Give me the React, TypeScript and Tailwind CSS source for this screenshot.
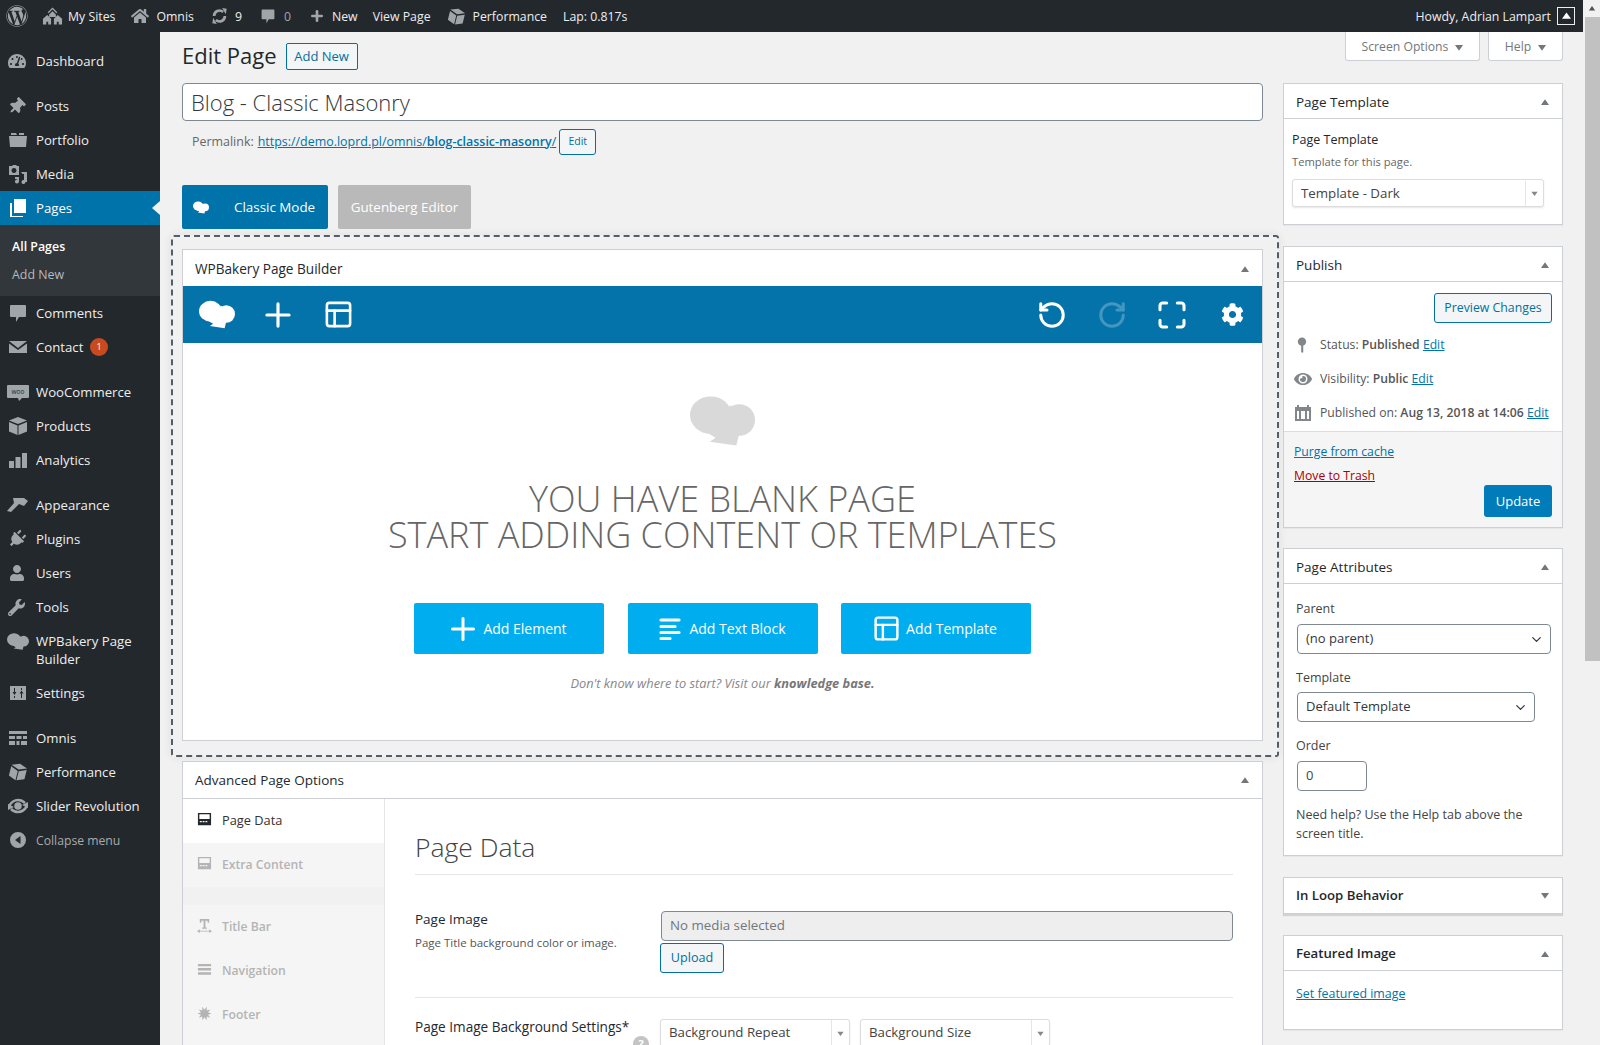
import type { ReactNode } from "react"
import { ChevronDown, Maximize, PanelsTopLeft, Plus, RotateCcw, RotateCw } from "lucide-react"
import { FaCog, FaHome, FaPlug, FaThumbtack, FaUser, FaWordpress, FaWrench, FaTachometerAlt, FaEye } from "react-icons/fa"

type IconProps = { className?: string }

function Chef({ className }: IconProps) {
  return (
    <svg viewBox="0 0 66 50" className={className} fill="currentColor">
      <ellipse cx="21" cy="19" rx="21" ry="19" />
      <circle cx="50" cy="24" r="16" />
      <path d="M22 4 Q36 14 42 9 L50 38 L47 50 L20 46 L26 42 L14 35 Z" />
    </svg>
  )
}

function Tri({ down = false, className }: IconProps & { down?: boolean }) {
  return (
    <svg viewBox="0 0 10 8" className={className} fill="currentColor">
      <path d={down ? "M0 1h10L5 8z" : "M5 0l5 7H0z"} />
    </svg>
  )
}

const box = "h-5 w-5"

function Portfolio() {
  return (
    <svg viewBox="0 0 20 20" className={box} fill="currentColor">
      <path d="M1 6h18l-1 11H2zM3 3h5l1 2H3zM11 3h5v2h-5z" />
    </svg>
  )
}

function Media() {
  return (
    <svg viewBox="0 0 20 20" className={box} fill="currentColor">
      <path d="M1 2h3l1-1h3l1 1h2v9H1zM6 4a2.500 2.500 0 1 0 .01 0z" fillRule="evenodd" />
      <path d="M13 8h6v10h-1.500a2 2 0 1 1-1.500-2V10h-1.500zM7 13h4v4.500a2 2 0 1 1-1.500-2V15H7z" />
    </svg>
  )
}

function Pages() {
  return (
    <svg viewBox="0 0 20 20" className={box} fill="currentColor">
      <path d="M6 1h12v14H6z" />
      <path d="M2 5h2v13h11v1H2z" />
    </svg>
  )
}

function Bubble({ className = box }: IconProps) {
  return (
    <svg viewBox="0 0 20 20" className={className} fill="currentColor">
      <path d="M3 2h14a1 1 0 0 1 1 1v10a1 1 0 0 1-1 1h-6l-3 5v-5H3a1 1 0 0 1-1-1V3a1 1 0 0 1 1-1z" />
    </svg>
  )
}

function Mail() {
  return (
    <svg viewBox="0 0 20 20" className={box} fill="currentColor">
      <path d="M1 4h18L10 11zM1 6.500l9 6.500 9-6.500V16H1z" />
    </svg>
  )
}

function Woo() {
  return (
    <svg viewBox="0 0 22 20" className="-ml-[1px] h-5 w-[22px]">
      <path d="M1 3h20a1 1 0 0 1 1 1v11a1 1 0 0 1-1 1h-6l-3 3-1-3H1a1 1 0 0 1-1-1V4a1 1 0 0 1 1-1z" fill="currentColor" />
      <text x="11" y="12" fontSize="6.500" textAnchor="middle" fill="#23282d">woo</text>
    </svg>
  )
}

function Cube() {
  return (
    <svg viewBox="0 0 20 20" className={box} fill="currentColor">
      <path d="M10 1l9 3.500-9 3.500-9-3.500zM1 6l8.500 3.500V19L1 15.500zM19 6v9.500L10.500 19V9.500z" />
    </svg>
  )
}

function Bars() {
  return (
    <svg viewBox="0 0 20 20" className={box} fill="currentColor">
      <path d="M1 11h5v7H1zM7.500 7h5v11h-5zM14 3h5v15h-5z" />
    </svg>
  )
}

function Hammer() {
  return (
    <svg viewBox="0 0 22 20" className="-ml-[1px] h-5 w-[22px]" fill="currentColor">
      <path d="M6 3h11l4 3-4 5-5-2-8 8-4-1 7-8z" />
    </svg>
  )
}

function Sliders() {
  return (
    <svg viewBox="0 0 20 20" className={box} fill="currentColor" fillRule="evenodd">
      <path d="M2 3h16v14H2zM6 5v4H4.500L6.500 12 8.500 9H7V5zM6 13v2h1v-2zM13 5v2h1V5zM13.500 7.500L11.500 10.500H13V15h1v-4.500h1.500z" />
    </svg>
  )
}

function OmnisIcon() {
  return (
    <svg viewBox="0 0 20 20" className={box} fill="currentColor">
      <path d="M1 3h18v3H1zM1 8h6v3H1zM8.500 8h5v3h-5zM15 8h4v3h-4zM1 13h6v4H1zM8.500 13h3v4h-3zM13 13h6v4h-6z" />
    </svg>
  )
}

function Perf({ className = box }: IconProps) {
  return (
    <svg viewBox="0 0 20 20" className={className} fill="currentColor">
      <g transform="rotate(14 10 10)">
        <path d="M10 1.500l8 3-8 3-8-3z" />
        <path d="M2 6l7.500 3v9.500L2 15.500zM18 6v9.500l-7.500 3V9z" />
      </g>
    </svg>
  )
}

function Slider() {
  return (
    <svg viewBox="0 0 22 20" className="-ml-[1px] h-5 w-[22px]" fill="none" stroke="currentColor" strokeWidth="2.500">
      <path d="M2 10c3-5 6-6 9-6 3 0 5 1 7 3M20 10c-3 5-6 6-9 6-3 0-5-1-7-3" />
      <circle cx="11" cy="10" r="2.500" fill="currentColor" />
      <path d="M15 9l6-3v6zM7 11l-6 3V8z" fill="currentColor" stroke="none" />
    </svg>
  )
}

function Collapse() {
  return (
    <svg viewBox="0 0 20 20" className={box} fill="currentColor" fillRule="evenodd">
      <path d="M10 2a8 8 0 1 1 0 16 8 8 0 0 1 0-16zM12.500 6L7 10l5.500 4z" />
    </svg>
  )
}

function Sync({ className }: IconProps) {
  return (
    <svg viewBox="0 0 20 20" className={className} fill="none" stroke="currentColor" strokeWidth="3">
      <path d="M4 10a6 6 0 0 1 10-4.500M16 10a6 6 0 0 1-10 4.500" />
      <path d="M13 1l5 1-1 6zM7 19l-5-1 1-6z" fill="currentColor" stroke="none" />
    </svg>
  )
}

function Sites() {
  return (
    <svg viewBox="0 0 22 20" className="h-5 w-[21px]" fill="currentColor">
      <path d="M11 1l5 5-1 1-4-4-4 4-1-1zM11 5l3.500 3.500V11h-7V8.500z" />
      <path d="M5.500 9l4 4v6h-3v-3h-2v3H1v-6zM16.500 9l4.500 4v6h-3.500v-3h-2v3h-3v-6z" />
    </svg>
  )
}

function TextLines({ className }: IconProps) {
  return (
    <svg viewBox="0 0 22 24" className={className} fill="none" stroke="currentColor" strokeWidth="3.200" strokeLinecap="round">
      <path d="M2 3h18M2 9.500h14M2 15.500h18M2 21.500h9" />
    </svg>
  )
}

function MenuItem({ icon, label, active, dim, badge }: { icon: ReactNode; label: ReactNode; active?: boolean; dim?: boolean; badge?: string }) {
  return (
    <div className={`relative flex items-start py-[8px] pl-[8px] leading-[18px] ${active ? "bg-[#0073aa] text-white" : dim ? "text-[#aaaaaa]" : "text-[#eeeeee]"}`}>
      <span className={`flex h-[18px] w-[28px] shrink-0 items-center ${active ? "text-white" : "text-[#a0a5aa]"}`}>{icon}</span>
      <span className="flex-1">{label}</span>
      {badge && (
        <span className="absolute left-[90px] top-[8px] flex h-[18px] w-[18px] items-center justify-center rounded-full bg-[#ca4a1f] text-[9px] text-white">
          {badge}
        </span>
      )}
      {active && (
        <span className="absolute right-0 top-[10px] h-0 w-0 border-y-[7px] border-r-[8px] border-y-transparent border-r-[#f1f1f1]" />
      )}
    </div>
  )
}

function Sidebar() {
  return (
    <aside className="h-full w-[160px] shrink-0 bg-[#23282d] pt-[12px] text-[13.2px]">
      <MenuItem icon={<FaTachometerAlt className="h-[18px] w-[18px]" />} label="Dashboard" />
      <div className="h-[11px]" />
      <MenuItem icon={<FaThumbtack className="h-[17px] w-[17px] rotate-45" />} label="Posts" />
      <MenuItem icon={<Portfolio />} label="Portfolio" />
      <MenuItem icon={<Media />} label="Media" />
      <MenuItem active icon={<Pages />} label="Pages" />
      <div className="h-[71px] bg-[#32373c] pl-[12px] pt-[8px] text-[12.4px] leading-[28px] text-[#b4b9be]">
        <div className="font-semibold text-white">All Pages</div>
        <div>Add New</div>
      </div>
      <MenuItem icon={<Bubble />} label="Comments" />
      <MenuItem icon={<Mail />} label="Contact" badge="1" />
      <div className="h-[11px]" />
      <MenuItem icon={<Woo />} label="WooCommerce" />
      <MenuItem icon={<Cube />} label="Products" />
      <MenuItem icon={<Bars />} label="Analytics" />
      <div className="h-[11px]" />
      <MenuItem icon={<Hammer />} label="Appearance" />
      <MenuItem icon={<FaPlug className="h-[18px] w-[18px] rotate-45" />} label="Plugins" />
      <MenuItem icon={<FaUser className="h-[16px] w-[18px]" />} label="Users" />
      <MenuItem icon={<FaWrench className="h-[17px] w-[17px]" />} label="Tools" />
      <MenuItem icon={<Chef className="-ml-[1px] h-[17px] w-[22px]" />} label="WPBakery Page Builder" />
      <MenuItem icon={<Sliders />} label="Settings" />
      <div className="h-[11px]" />
      <MenuItem icon={<OmnisIcon />} label="Omnis" />
      <MenuItem icon={<Perf />} label="Performance" />
      <MenuItem icon={<Slider />} label="Slider Revolution" />
      <MenuItem dim icon={<Collapse />} label={<span className="text-[12.2px]">Collapse menu</span>} />
    </aside>
  )
}

function AdminBar() {
  return (
    <header className="flex h-[32px] shrink-0 items-center bg-[#23282d] pt-[2px] text-[12.3px] text-[#eeeeee]">
      <div className="-mt-[2px] flex items-center pl-[6px] text-[#a0a5aa]">
        <FaWordpress className="h-[22px] w-[22px]" />
        <span className="ml-[14px]"><Sites /></span>
      </div>
      <span className="ml-[5px]">My Sites</span>
      <FaHome className="-mt-[2px] ml-[16px] h-[18px] w-[18px] text-[#a0a5aa]" />
      <span className="ml-[7px]">Omnis</span>
      <Sync className="-mt-[2px] ml-[16px] h-[18px] w-[19px] text-[#a0a5aa]" />
      <span className="ml-[6px]">9</span>
      <span className="-mt-[2px] ml-[18px] text-[#a0a5aa]"><Bubble className="h-[18px] w-[16px]" /></span>
      <span className="ml-[8px] text-[#a0a5aa]">0</span>
      <Plus className="-mt-[2px] ml-[18px] h-[16px] w-[16px] text-[#a0a5aa]" strokeWidth={4} />
      <span className="ml-[7px]">New</span>
      <span className="ml-[15px]">View Page</span>
      <span className="-mt-[2px] ml-[16px] text-[#a0a5aa]"><Perf className="h-[19px] w-[19px]" /></span>
      <span className="ml-[7px]">Performance</span>
      <span className="ml-[16px]">Lap: 0.817s</span>
      <span className="ml-auto">Howdy, Adrian Lampart</span>
      <span className="-mt-[2px] ml-[6px] mr-[8px] flex h-[18px] w-[18px] items-center justify-center border border-[#eeeeee]">
        <Tri className="h-[8px] w-[9px] text-white" />
      </span>
    </header>
  )
}

function Metabox({ title, closed, bold, headClass = "h-[35px] pt-[2px]", className = "", children }: { title: string; closed?: boolean; bold?: boolean; headClass?: string; className?: string; children?: ReactNode }) {
  return (
    <section className={`border border-[#ccd0d4] bg-white shadow-[0_1px_1px_rgba(0,0,0,0.04)] ${className}`}>
      <div className={`flex items-center justify-between pl-[12px] pr-[13px] text-[#23282d] ${closed ? "h-[35px]" : `border-b border-[#ccd0d4] ${headClass}`} ${bold ? "text-[13.2px] font-semibold" : "text-[13.5px] font-medium"}`}>
        <span>{title}</span>
        <Tri down={closed} className="h-[7px] w-[8px] text-[#72777c]" />
      </div>
      {children}
    </section>
  )
}

function TabIcon({ d }: { d: string }) {
  return (
    <svg viewBox="0 0 16 16" className="-mt-[3px] h-[15px] w-[15px]" fill="currentColor" fillRule="evenodd">
      <path d={d} />
    </svg>
  )
}

const windowIcon = "M1 1h14v13H1zM2.500 2.500v5h11v-5zM3 9.500v1.500h2V9.500zM6 9.500v1.500h2V9.500zM9 9.500v1.500h2V9.500z"

function Tab({ icon, label, active }: { icon: ReactNode; label: string; active?: boolean }) {
  return (
    <div className={`flex h-[44px] items-center pl-[14px] ${active ? "bg-white text-[12.8px] text-[#333333]" : "bg-[#f5f5f5] text-[12.2px] font-semibold text-[#b4b4b4]"}`}>
      <span className="w-[25px]">{icon}</span>
      {label}
    </div>
  )
}

function PickSelect({ label, className = "" }: { label: string; className?: string }) {
  return (
    <div className={`flex h-[28px] items-center rounded-[3px] border border-[#dddddd] bg-white pl-[8px] text-[13.3px] text-[#444444] shadow-[0_1px_2px_rgba(0,0,0,0.1)] ${className}`}>
      <span className="flex-1">{label}</span>
      <span className="flex h-full w-[18px] items-center justify-center border-l border-[#e5e5e5] text-[#888888]">
        <Tri down className="h-[5px] w-[7px]" />
      </span>
    </div>
  )
}

function CyanButton({ icon, label }: { icon: ReactNode; label: string }) {
  return (
    <div className="flex h-[51px] w-[190px] items-center justify-center gap-[8px] rounded-[2px] bg-[#00aeef] text-[14px] text-white">
      {icon}
      {label}
    </div>
  )
}

function Builder() {
  return (
    <section className="border border-[#ccd0d4] bg-white">
      <div className="flex h-[36px] items-center justify-between pl-[12px] pr-[13px] pt-[2px] text-[13.6px] font-medium text-[#23282d]">
        <span>WPBakery Page Builder</span>
        <Tri className="h-[7px] w-[8px] text-[#72777c]" />
      </div>
      <div className="flex h-[57px] items-center justify-between bg-[#0473aa] pl-[4px] text-white">
        <div className="flex items-center">
          <span className="flex w-[60px] justify-center"><Chef className="h-[29px] w-[36px]" /></span>
          <span className="flex w-[62px] justify-center"><Plus className="h-[38px] w-[38px]" strokeWidth={2} /></span>
          <span className="flex w-[58px] justify-center"><PanelsTopLeft className="h-[31px] w-[31px]" strokeWidth={2} /></span>
        </div>
        <div className="flex items-center">
          <span className="flex w-[60px] justify-center"><RotateCcw className="h-[30px] w-[30px]" strokeWidth={2.4} /></span>
          <span className="flex w-[60px] justify-center opacity-25"><RotateCw className="h-[30px] w-[30px]" strokeWidth={2.4} /></span>
          <span className="flex w-[60px] justify-center"><Maximize className="h-[32px] w-[32px]" strokeWidth={2.3} /></span>
          <span className="flex w-[60px] justify-center"><FaCog className="h-[23px] w-[23px]" /></span>
        </div>
      </div>
      <div className="flex h-[397px] flex-col items-center pt-[53px]">
        <Chef className="h-[50px] w-[65px] text-[#d9d9d9]" />
        <h2 className="mt-[35px] text-center text-[36px] font-light leading-[36px] text-[#666666]">
          YOU HAVE BLANK PAGE
          <br />
          START ADDING CONTENT OR TEMPLATES
        </h2>
        <div className="mt-[50px] flex gap-[23.5px]">
          <CyanButton icon={<Plus className="-mx-[6px] h-[36px] w-[36px]" strokeWidth={2} />} label="Add Element" />
          <CyanButton icon={<TextLines className="h-[24px] w-[22px]" />} label="Add Text Block" />
          <CyanButton icon={<PanelsTopLeft className="-mx-[3px] h-[29px] w-[29px]" strokeWidth={2} />} label="Add Template" />
        </div>
        <p className="mt-[20px] text-[12.8px] italic text-[#888888]">
          Don't know where to start? Visit our <b className="font-bold text-[#777777]">knowledge base.</b>
        </p>
      </div>
    </section>
  )
}

function AdvancedOptions() {
  const burst = Array.from({ length: 20 }, (_, i) => {
    const r = i % 2 ? 4 : 7.5
    const a = (i * Math.PI) / 10
    return `${(8 + r * Math.cos(a)).toFixed(1)},${(8 + r * Math.sin(a)).toFixed(1)}`
  }).join(" ")

  return (
    <Metabox title="Advanced Page Options" headClass="h-[37px]" className="mt-[4px] h-[400px]">
      <div className="flex">
        <div className="w-[202px] shrink-0 border-r border-[#e5e5e5] bg-[#f1f1f1]">
          <Tab active icon={<span className="text-[#23282d]"><TabIcon d={windowIcon} /></span>} label="Page Data" />
          <Tab icon={<TabIcon d={windowIcon} />} label="Extra Content" />
          <div className="h-[18px]" />
          <Tab icon={<TabIcon d="M3 1h10v4h-1.500L11 3H9v7h1.500v1.500h-5V10H7V3H5L4.500 5H3zM0 14l3-2v1.500h10V12l3 2-3 2v-1.500H3V16z" />} label="Title Bar" />
          <Tab icon={<TabIcon d="M1 2h14v2.500H1zM1 6.500h14V9H1zM1 11h14v2.500H1z" />} label="Navigation" />
          <Tab icon={<svg viewBox="0 0 16 16" className="-mt-[3px] h-[15px] w-[15px]" fill="currentColor"><polygon points={burst} /></svg>} label="Footer" />
          <div className="h-[40px] bg-[#f5f5f5]" />
        </div>
        <div className="flex-1 pl-[30px] pr-[29px] text-[#444444]">
          <h3 className="mt-[30px] h-[46px] border-b border-[#e5e5e5] text-[26.5px] font-light leading-[36px] text-[#444444]">Page Data</h3>
          <div className="flex border-b border-[#e5e5e5] pb-[24px] pt-[36px]">
            <div className="-mt-[1px] w-[246px] shrink-0">
              <div className="text-[13.5px] font-medium leading-[18px] text-[#23282d]">Page Image</div>
              <div className="mt-[7px] text-[11.5px] leading-[16px] text-[#555555]">Page Title background color or image.</div>
            </div>
            <div className="flex-1">
              <div className="flex h-[30px] items-center rounded-[4px] border border-[#7e8993] bg-[#eeeeee] pl-[8px] text-[13.3px] text-[#72777c]">No media selected</div>
              <div className="-ml-px mt-[2px] flex h-[30px] w-[64px] items-center justify-center rounded-[3px] border border-[#0071a1] bg-[#f3f5f6] text-[12.6px] text-[#0071a1]">Upload</div>
            </div>
          </div>
          <div className="flex pt-[20px]">
            <div className="relative w-[245px] shrink-0 whitespace-nowrap text-[13.6px] font-medium leading-[18px] text-[#23282d]">
              Page Image Background Settings*
              <span className="absolute left-[218px] top-[18px] flex h-[16px] w-[16px] items-center justify-center rounded-full bg-[#c4c4c4] text-[11px] font-bold text-white">?</span>
            </div>
            <div className="mt-[1px] flex gap-[10px]">
              <PickSelect label="Background Repeat" className="w-[190px]" />
              <PickSelect label="Background Size" className="w-[190px]" />
            </div>
          </div>
        </div>
      </div>
    </Metabox>
  )
}

function NativeSelect({ label, className = "" }: { label: string; className?: string }) {
  return (
    <div className={`flex h-[30px] items-center justify-between rounded-[4px] border border-[#7e8993] bg-white pl-[8px] pr-[6px] text-[13px] text-[#32373c] ${className}`}>
      {label}
      <ChevronDown className="h-[15px] w-[15px]" strokeWidth={2} />
    </div>
  )
}

function Row({ icon, children }: { icon: ReactNode; children: ReactNode }) {
  return (
    <div className="flex h-[34px] items-center pl-[9px] text-[12.2px] text-[#555555]">
      <span className="flex w-[27px] justify-start text-[#82878c]">{icon}</span>
      <span>{children}</span>
    </div>
  )
}

function Edit() {
  return <a className="text-[#0073aa] underline">Edit</a>
}

function PublishBox() {
  return (
    <Metabox title="Publish" className="mt-[21px]">
      <div className="flex justify-end pr-[10px] pt-[11px]">
        <div className="flex h-[30px] w-[118px] items-center justify-center rounded-[3px] border border-[#0071a1] bg-[#f3f5f6] text-[12.3px] text-[#0071a1]">Preview Changes</div>
      </div>
      <div className="mt-[5px] pb-[1px]">
        <Row icon={<svg viewBox="0 0 12 20" className="ml-[4px] h-[18px] w-[10px]" fill="currentColor"><circle cx="6" cy="6" r="5" /><rect x="5" y="8" width="2.500" height="11" /></svg>}>
          Status: <b className="font-semibold">Published</b> <Edit />
        </Row>
        <Row icon={<FaEye className="h-[16px] w-[20px]" />}>
          Visibility: <b className="font-semibold">Public</b> <Edit />
        </Row>
        <Row icon={<svg viewBox="0 0 18 18" className="ml-[1px] h-[18px] w-[18px]" fill="currentColor" fillRule="evenodd"><path d="M1 3h2V1h2v2h8V1h2v2h2v14H1zM3 7v8h2V7zM7 7v8h4V7zM13 7v8h2V7z" /></svg>}>
          Published on: <b className="font-semibold">Aug 13, 2018 at 14:06</b> <Edit />
        </Row>
      </div>
      <div className="h-[96px] border-t border-[#dddddd] bg-[#f5f5f5] pl-[10px] pr-[10px] pt-[9px] text-[12.2px]">
        <div className="leading-[21px] text-[#0073aa] underline">Purge from cache</div>
        <div className="mt-[3px] leading-[21px] text-[#a00] underline">Move to Trash</div>
        <div className="-mt-[1px] flex justify-end">
          <div className="flex h-[32px] w-[68px] items-center justify-center rounded-[3px] bg-[#007cba] pt-[1px] text-[13px] text-white">Update</div>
        </div>
      </div>
    </Metabox>
  )
}

function RightColumn() {
  return (
    <div className="w-[280px] shrink-0">
      <div className="flex justify-end gap-[8px] text-[12.2px] text-[#72777c]">
        <div className="flex h-[29px] w-[135px] items-center justify-center gap-[7px] rounded-b-[3px] border border-t-0 border-[#ccd0d4] bg-white pt-[2px]">
          Screen Options <Tri down className="h-[7px] w-[8px]" />
        </div>
        <div className="flex h-[29px] w-[75px] items-center justify-center gap-[7px] rounded-b-[3px] border border-t-0 border-[#ccd0d4] bg-white pt-[2px]">
          Help <Tri down className="h-[7px] w-[8px]" />
        </div>
      </div>

      <Metabox title="Page Template" className="mt-[22px] h-[142px]">
        <div className="pl-[8px] pt-[12px]">
          <div className="text-[12.5px] font-medium leading-[18px] text-[#23282d]">Page Template</div>
          <div className="mt-[5px] text-[11.2px] leading-[16px] text-[#666666]">Template for this page.</div>
          <PickSelect label="Template - Dark" className="mt-[9px] w-[252px] pt-[1px]" />
        </div>
      </Metabox>

      <PublishBox />

      <Metabox title="Page Attributes" className="mt-[20px] h-[308px]">
        <div className="px-[12px] pt-[16px] text-[12.5px] text-[#444444]">
          <div className="leading-[18px]">Parent</div>
          <NativeSelect label="(no parent)" className="ml-px mt-[6px] w-[254px]" />
          <div className="mt-[15px] leading-[18px]">Template</div>
          <NativeSelect label="Default Template" className="ml-px mt-[5px] w-[238px]" />
          <div className="mt-[15px] leading-[18px]">Order</div>
          <div className="ml-px mt-[6px] flex h-[30px] w-[70px] items-center rounded-[4px] border border-[#7e8993] pl-[8px] text-[13px]">0</div>
          <p className="mt-[14px] leading-[19px]">Need help? Use the Help tab above the screen title.</p>
        </div>
      </Metabox>

      <Metabox closed bold title="In Loop Behavior" className="mt-[21px] shadow-[0_2px_1px_rgba(0,0,0,0.12)]" />

      <Metabox title="Featured Image" bold className="mt-[21px] h-[95px]">
        <div className="pl-[12px] pt-[14px] text-[12.4px] leading-[18px] text-[#0073aa] underline">Set featured image</div>
      </Metabox>
    </div>
  )
}

function LeftColumn() {
  return (
    <div className="w-[1081px] shrink-0">
      <div className="mt-[11px] flex h-[27px] items-center gap-[9px]">
        <h1 className="pb-[3px] text-[22px] leading-[27px] text-[#23282d]">Edit Page</h1>
        <div className="flex h-[27px] w-[72px] items-center justify-center rounded-[2px] border border-[#0071a1] bg-[#f3f5f6] text-[13px] text-[#0071a1]">Add New</div>
      </div>
      <div className="mt-[13px] flex h-[38px] items-center rounded-[4px] border border-[#7e8993] bg-white pl-[8px] pt-[1px] text-[22px] font-light text-[#32373c]">Blog - Classic Masonry</div>
      <div className="mt-[8px] flex h-[26px] items-center pl-[10px] text-[12.45px] text-[#666666]">
        <span className="font-medium">Permalink:</span>
        <a className="ml-[4px] text-[#0073aa] underline">
          https://demo.loprd.pl/omnis/<b className="font-semibold">blog-classic-masonry</b>/
        </a>
        <span className="ml-[3px] flex h-[26px] w-[37px] items-center justify-center rounded-[3px] border border-[#0071a1] bg-[#f3f5f6] text-[10.5px] text-[#0071a1]">Edit</span>
      </div>
      <div className="mt-[30px] flex gap-[10px] text-[13.4px] text-white">
        <div className="flex h-[44px] w-[146px] items-center rounded-[2px] bg-[#0073aa] pl-[11px] pt-[1px]">
          <Chef className="h-[13px] w-[16px]" />
          <span className="ml-[25px]">Classic Mode</span>
        </div>
        <div className="flex h-[44px] w-[133px] items-center justify-center rounded-[2px] bg-[#b9b9b9] pt-[1px]">Gutenberg Editor</div>
      </div>
      <div className="-ml-[11px] -mr-[16px] mt-[6px] rounded-[3px] border-2 border-dashed border-[#555d66] pb-[14px] pl-[9px] pr-[14px] pt-[12px] shadow-[0_0_10px_rgba(0,0,0,0.08)]">
        <Builder />
      </div>
      <AdvancedOptions />
    </div>
  )
}

function Scrollbar() {
  return (
    <div className="flex h-full w-[17px] shrink-0 flex-col items-center bg-[#f1f1f1]">
      <Tri className="mt-[6px] h-[5px] w-[8px] text-[#505050]" />
      <div className="ml-[2px] mt-[6px] h-[644px] w-[15px] bg-[#c1c1c1]" />
    </div>
  )
}

export default function App() {
  return (
    <div className="flex h-[1045px] w-[1600px] overflow-hidden bg-[#f1f1f1] font-['Open_Sans',sans-serif]">
      <div className="flex w-[1583px] shrink-0 flex-col">
        <AdminBar />
        <div className="flex min-h-0 flex-1">
          <Sidebar />
          <main className="flex min-w-0 flex-1 gap-[20px] pl-[22px]">
            <LeftColumn />
            <RightColumn />
          </main>
        </div>
      </div>
      <Scrollbar />
    </div>
  )
}
